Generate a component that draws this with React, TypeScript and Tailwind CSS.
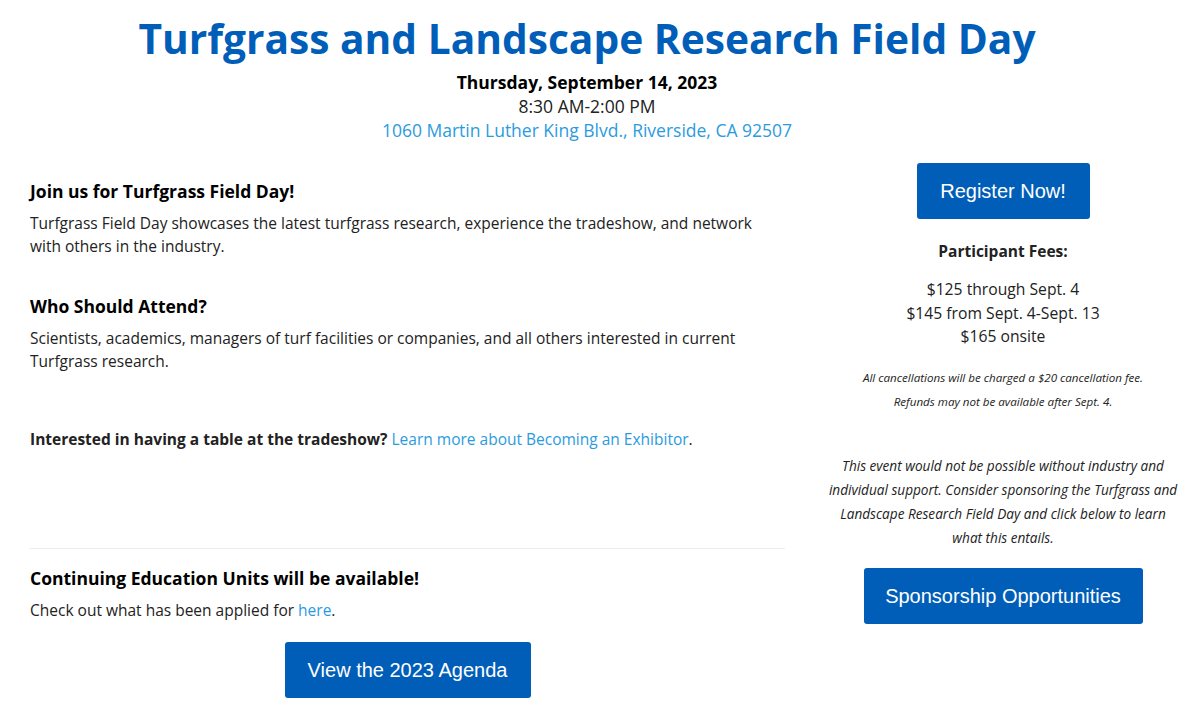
export default function App() {
  return (
    <div className="min-h-screen bg-white text-[#222] font-['Open_Sans',sans-serif]">
      {/* Header */}
      <header className="w-[1174px] text-center pt-[11px]">
        <h1 className="text-[40.7px] leading-[54px] font-bold text-[#005eb8]">
          Turfgrass and Landscape Research Field Day
        </h1>
        <p className="mt-[5px] text-[17.5px] leading-[24px] font-bold text-black">Thursday, September 14, 2023</p>
        <p className="text-[17.5px] leading-[24px]">8:30 AM-2:00 PM</p>
        <a href="#" className="block text-[17.5px] leading-[24px] text-[#2b9be0]">
          1060 Martin Luther King Blvd., Riverside, CA 92507
        </a>
      </header>

      <div className="flex pl-[30px] pt-[21px]">
        {/* Left column */}
        <div className="w-[755px] text-[15.5px] leading-[23px]">
          <div className="pt-[16px]">
            <h2 className="text-[17.5px] leading-[24px] font-bold text-black">Join us for Turfgrass Field Day!</h2>
            <p className="mt-[9px]">
              Turfgrass Field Day showcases the latest turfgrass research, experience the tradeshow, and network
              <br />
              with others in the industry.
            </p>
          </div>
          <div className="mt-[36px]">
            <h2 className="text-[17.5px] leading-[24px] font-bold text-black">Who Should Attend?</h2>
            <p className="mt-[9px]">
              Scientists, academics, managers of turf facilities or companies, and all others interested in current
              <br />
              Turfgrass research.
            </p>
          </div>
          <p className="mt-[55px]">
            <span className="font-bold">Interested in having a table at the tradeshow?</span>{" "}
            <a href="#" className="text-[#2b9be0]">Learn more about Becoming an Exhibitor</a>.
          </p>
          <hr className="mt-[97px] border-0 border-t border-[#ececec]" />
          <h2 className="mt-[17px] text-[17.5px] leading-[24px] font-bold text-black">
            Continuing Education Units will be available!
          </h2>
          <p className="mt-[9px]">
            Check out what has been applied for <a href="#" className="text-[#2b9be0]">here</a>.
          </p>
          <div className="flex justify-center mt-[20px]">
            <a
              href="#"
              className="w-[246px] h-[56px] rounded-[3px] bg-[#005eb8] text-white flex items-center justify-center text-[20px] font-['Liberation_Sans',Arial,sans-serif]"
            >
              View the 2023 Agenda
            </a>
          </div>
        </div>

        {/* Right column */}
        <div className="w-[366px] ml-[35px] flex flex-col items-center text-center">
          <a
            href="#"
            className="w-[173px] h-[56px] rounded-[3px] bg-[#005eb8] text-white flex items-center justify-center text-[20px] font-['Liberation_Sans',Arial,sans-serif]"
          >
            Register Now!
          </a>
          <p className="mt-[21px] text-[15.5px] leading-[23px] font-bold">Participant Fees:</p>
          <div className="mt-[15px] text-[15.7px] leading-[23.5px]">
            <p>$125 through Sept. 4</p>
            <p>$145 from Sept. 4-Sept. 13</p>
            <p>$165 onsite</p>
          </div>
          <div className="mt-[17px] text-[11.6px] leading-[24px] italic">
            <p>All cancellations will be charged a $20 cancellation fee.</p>
            <p>Refunds may not be available after Sept. 4.</p>
          </div>
          <p className="mt-[40px] text-[13.6px] leading-[24px] italic">
            This event would not be possible without industry and
            <br />
            individual support. Consider sponsoring the Turfgrass and
            <br />
            Landscape Research Field Day and click below to learn
            <br />
            what this entails.
          </p>
          <a
            href="#"
            className="mt-[18px] w-[279px] h-[56px] rounded-[3px] bg-[#005eb8] text-white flex items-center justify-center text-[20px] font-['Liberation_Sans',Arial,sans-serif]"
          >
            Sponsorship Opportunities
          </a>
        </div>
      </div>
    </div>
  );
}
